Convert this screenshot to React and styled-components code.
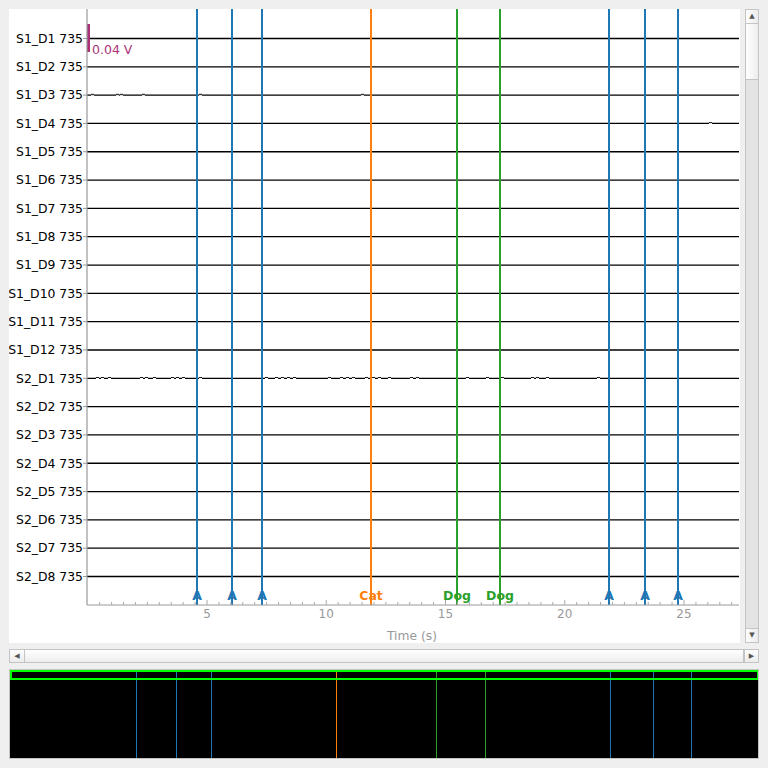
import React from 'react'
import styled, { createGlobalStyle } from 'styled-components'

const GlobalStyle = createGlobalStyle`
    html, body {
        margin: 0;
        padding: 0;
        background: #efefef;
        font-family: "DejaVu Sans", sans-serif;
    }
`

const Window = styled.div`
    width: 768px;
    height: 768px;
    box-sizing: border-box;
    padding: 9px;
    display: flex;
    flex-direction: column;
    background: #efefef;
`

const TopRow = styled.div`
    display: flex;
    height: 634px;
    gap: 5px;
`

const PlotPanel = styled.div`
    width: 731px;
    height: 634px;
    background: #ffffff;
    overflow: hidden;
`

const VScroll = styled.div`
    width: 14px;
    display: flex;
    flex-direction: column;
    border: 1px solid #c4c4c4;
    box-sizing: border-box;
    background: #e3e3e3;
`

const HScroll = styled.div`
    margin-top: 6px;
    height: 14px;
    display: flex;
    border: 1px solid #c4c4c4;
    box-sizing: border-box;
    background: #e3e3e3;
`

const ArrowButton = styled.div`
    flex: 0 0 ${p => p.size}px;
    height: ${p => p.vertical ? `${p.size}px` : 'auto'};
    display: flex;
    align-items: center;
    justify-content: center;
    background: linear-gradient(${p => p.vertical ? '90deg' : '180deg'}, #fdfdfd, #ececec);
    box-sizing: border-box;
    border-${p => p.edge}: 1px solid #c4c4c4;
    color: #555;
    font-size: 7px;
    line-height: 1;
`

const Thumb = styled.div`
    flex: ${p => p.grow ? '1 1 auto' : `0 0 ${p.size}px`};
    background: linear-gradient(${p => p.vertical ? '90deg' : '180deg'}, #ffffff, #ededed);
    box-sizing: border-box;
    border-${p => p.edge}: 1px solid #c4c4c4;
`

const Track = styled.div`
    flex: 1 1 auto;
`

const Overview = styled.div`
    margin-top: 6px;
    height: 90px;
    background: #000;
    box-sizing: border-box;
    border: 1px solid #c4c4c4;
    overflow: hidden;
`

const channels = [
    'S1_D1 735', 'S1_D2 735', 'S1_D3 735', 'S1_D4 735', 'S1_D5 735', 'S1_D6 735',
    'S1_D7 735', 'S1_D8 735', 'S1_D9 735', 'S1_D10 735', 'S1_D11 735', 'S1_D12 735',
    'S2_D1 735', 'S2_D2 735', 'S2_D3 735', 'S2_D4 735', 'S2_D5 735', 'S2_D6 735',
    'S2_D7 735', 'S2_D8 735',
]

const BLUE = '#1f77b4'
const ORANGE = '#ff7f0e'
const GREEN = '#2ca02c'

const annotations = [
    { x: 197, label: 'A', color: BLUE },
    { x: 232, label: 'A', color: BLUE },
    { x: 262, label: 'A', color: BLUE },
    { x: 371, label: 'Cat', color: ORANGE },
    { x: 457, label: 'Dog', color: GREEN },
    { x: 500, label: 'Dog', color: GREEN },
    { x: 609, label: 'A', color: BLUE },
    { x: 645, label: 'A', color: BLUE },
    { x: 678, label: 'A', color: BLUE },
]

const overviewLines = [
    { x: 136, color: BLUE }, { x: 176, color: BLUE }, { x: 211, color: BLUE },
    { x: 336, color: ORANGE }, { x: 436, color: GREEN }, { x: 485, color: GREEN },
    { x: 610, color: BLUE }, { x: 653, color: BLUE }, { x: 691, color: BLUE },
]

// little wiggles on the noisy channels
const noise = {
    2: [91, 116, 120, 142, 199, 361],
    3: [709],
    12: [96, 101, 108, 140, 145, 153, 171, 176, 182, 199, 265, 275, 281, 287, 293, 328, 340, 346, 352, 365, 372, 378, 388, 410, 416, 466, 486, 501, 531, 536, 546, 597],
}

const LEFT = 87
const RIGHT = 739
const TOP = 9
const BOTTOM = 605
const rowY = i => 38.5 + i * 28.316
const timeX = t => 87.75 + 23.85 * t

const Plot = () => {
    const minor = []
    for (let t = 0.5; t < 27.4; t += 0.5) minor.push(t)
    return (
        <svg width="731" height="634" viewBox="9 9 731 634">
            {channels.map((name, i) => {
                const y = rowY(i)
                return (
                    <g key={name}>
                        <line x1={LEFT} x2={RIGHT} y1={y} y2={y} stroke="#000" strokeWidth="1.3" />
                        {(noise[i] || []).map(x => (
                            <g key={x}>
                                <line x1={x} x2={x + 3} y1={y} y2={y} stroke="#fff" strokeWidth="1.4" />
                                <line x1={x} x2={x + 3} y1={y - 0.8} y2={y - 0.8} stroke="#000" strokeWidth="0.9" />
                            </g>
                        ))}
                        <line x1={LEFT} x2={LEFT - 4} y1={y} y2={y} stroke="#999" strokeWidth="1" />
                        <text x="83" y={y + 0.8} textAnchor="end" dominantBaseline="middle"
                            fontFamily="DejaVu Sans" fontSize="12.4" fill="#000">{name}</text>
                    </g>
                )
            })}

            {annotations.map((a, i) => (
                <g key={i}>
                    <line x1={a.x} x2={a.x} y1={TOP} y2={BOTTOM} stroke={a.color} strokeWidth="2" />
                    <text x={a.x} y="600" textAnchor="middle" fontFamily="DejaVu Sans"
                        fontWeight="bold" fontSize="12.5" fill={a.color}>{a.label}</text>
                </g>
            ))}

            <rect x={LEFT} y="24" width="3" height="28" fill="#aa3377" />
            <text x="92" y="54" fontFamily="DejaVu Sans" fontSize="12.5" fill="#aa3377">0.04 V</text>

            <line x1={LEFT} x2={LEFT} y1={TOP} y2={BOTTOM} stroke="#999" strokeWidth="1.2" />
            <line x1={LEFT} x2={RIGHT} y1={BOTTOM} y2={BOTTOM} stroke="#999" strokeWidth="1.2" />
            {minor.map(t => {
                const major = t % 5 === 0
                return (
                    <line key={t} x1={timeX(t)} x2={timeX(t)} y1={BOTTOM} y2={BOTTOM - (major ? 5 : 3)}
                        stroke="#aaa" strokeWidth="1" />
                )
            })}
            {[5, 10, 15, 20, 25].map(t => (
                <text key={t} x={timeX(t)} y="618" textAnchor="middle" fontFamily="DejaVu Sans"
                    fontSize="12" fill="#999">{t}</text>
            ))}
            <text x="412" y="640" textAnchor="middle" fontFamily="DejaVu Sans" fontSize="12.3" fill="#999">Time (s)</text>
        </svg>
    )
}

const OverviewChart = () => (
    <svg width="748" height="88" viewBox="10 670 748 88">
        {overviewLines.map(l => (
            <line key={l.x} x1={l.x + 0.5} x2={l.x + 0.5} y1="670" y2="758" stroke={l.color} strokeWidth="1" />
        ))}
        <rect x="11" y="671" width="747" height="8" fill="none" stroke="#00ff00" strokeWidth="2" />
    </svg>
)

const App = () => (
    <Window>
        <GlobalStyle />
        <TopRow>
            <PlotPanel>
                <Plot />
            </PlotPanel>
            <VScroll>
                <ArrowButton vertical size={14} edge="bottom">▲</ArrowButton>
                <Thumb vertical size={56} edge="bottom" />
                <Track />
                <ArrowButton vertical size={14} edge="top">▼</ArrowButton>
            </VScroll>
        </TopRow>
        <HScroll>
            <ArrowButton size={15} edge="right">◀</ArrowButton>
            <Thumb grow edge="right" />
            <ArrowButton size={14} edge="left">▶</ArrowButton>
        </HScroll>
        <Overview>
            <OverviewChart />
        </Overview>
    </Window>
)

export default App
